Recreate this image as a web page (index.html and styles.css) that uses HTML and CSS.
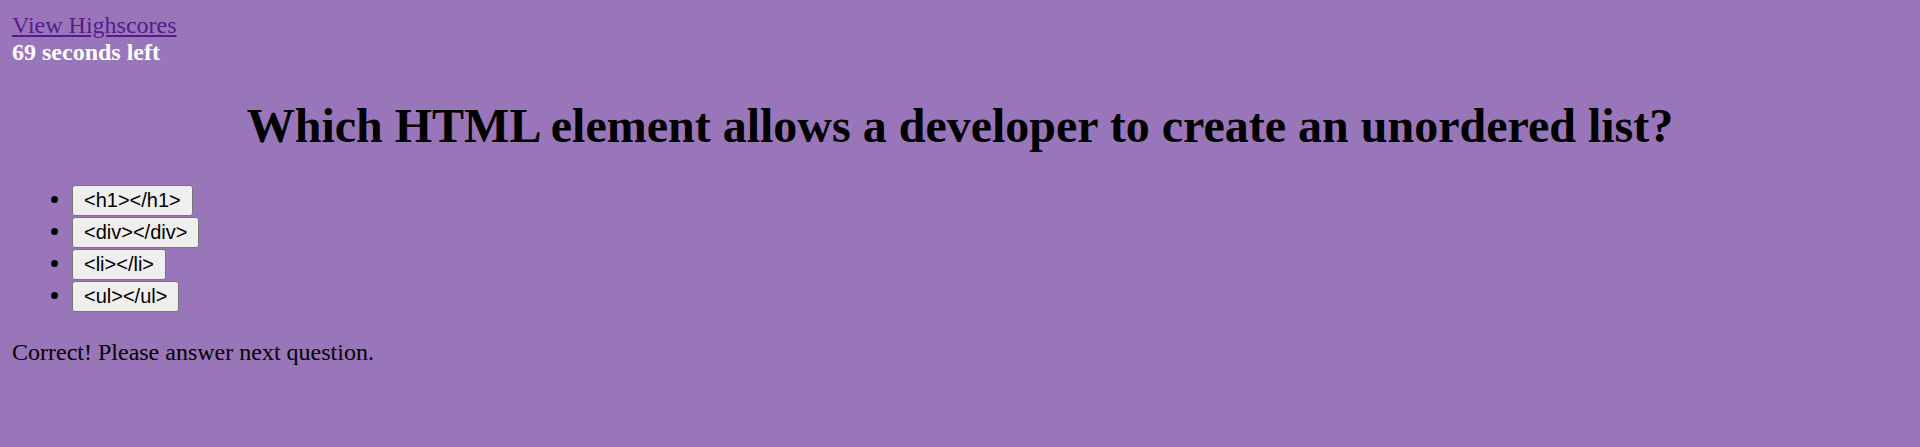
FILE: index.html
```html
<!DOCTYPE html>
<html lang="en">
<head>
<meta charset="utf-8">
<title>Code Quiz</title>
<link rel="stylesheet" href="styles.css">
</head>
<body>
<header class="top">
  <a class="scores-link" href="#">View Highscores</a>
  <div class="timer">69 seconds left</div>
</header>
<main class="quiz">
  <h1 class="question">Which HTML element allows a developer to create an unordered list?</h1>
  <ul class="answers">
    <li><button class="answer">&lt;h1&gt;&lt;/h1&gt;</button></li>
    <li><button class="answer">&lt;div&gt;&lt;/div&gt;</button></li>
    <li><button class="answer">&lt;li&gt;&lt;/li&gt;</button></li>
    <li><button class="answer">&lt;ul&gt;&lt;/ul&gt;</button></li>
  </ul>
  <p class="feedback">Correct! Please answer next question.</p>
</main>
</body>
</html>
```

FILE: styles.css
```css
html {
  background: #9876b9;
}
body {
  margin: 12px;
  font-family: "Liberation Serif", "Times New Roman", serif;
  font-size: 24px;
  color: #000;
}
.top {
  display: block;
}
.scores-link {
  color: #551a8b;
  text-decoration: underline;
}
.timer {
  color: #fff;
  font-weight: bold;
}
.question {
  font-size: 48px;
  font-weight: bold;
  text-align: center;
  margin: 32px 0;
}
.answers {
  margin: 24px 0 26px;
  padding-left: 60px;
  list-style: disc;
}
.answers li {
  line-height: 27.6px;
  height: 32px;
}
.answer {
  font-family: "Liberation Sans", Arial, sans-serif;
  font-size: 20px;
  line-height: 23px;
  padding: 3px 11px;
  background: #efefef;
  color: #000;
  border: 1px solid #767676;
  border-radius: 3px;
  vertical-align: baseline;
  cursor: pointer;
}
.feedback {
  margin: 24px 0;
}
```
